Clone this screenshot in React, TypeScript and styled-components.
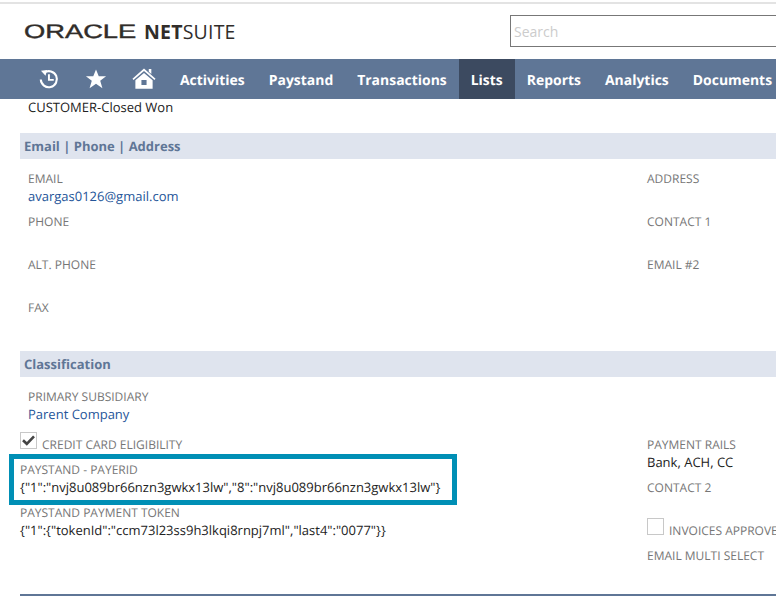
import React, { FC } from "react";
import styled, { createGlobalStyle } from "styled-components";

const GlobalStyle = createGlobalStyle`
  html, body {
    margin: 0;
    padding: 0;
    background: #fff;
    font-family: "Open Sans", "Liberation Sans", sans-serif;
    text-rendering: geometricPrecision;
  }
`;

const Page = styled.div`
  width: 776px;
  height: 596px;
  overflow: hidden;
  display: flex;
  flex-direction: column;
`;

const Header = styled.header`
  height: 57px;
  flex: none;
  border-top: 2px solid #e3e3e3;
  margin-top: 2px;
  box-sizing: border-box;
  display: flex;
  align-items: center;
  padding-left: 24px;
  justify-content: space-between;
`;

const Logo = styled.div`
  display: flex;
  align-items: center;
  color: #312d2a;
  width: 486px;
  flex: none;
  line-height: 18px;
`;

const OracleWord = styled.span`
  font-family: "Liberation Sans", sans-serif;
  font-size: 19.5px;
  display: inline-block;
  width: 120px;
  transform: scaleX(1.4);
  transform-origin: left center;
  -webkit-text-stroke: 0.4px #312d2a;
`;

const SuiteWord = styled.span`
  font-family: "Open Sans", sans-serif;
  font-size: 19.5px;
  font-weight: 400;
  letter-spacing: 0.2px;
  b {
    font-weight: 700;
  }
`;

const SearchInput = styled.input`
  flex: none;
  width: 300px;
  height: 32px;
  box-sizing: border-box;
  border: 1px solid #777;
  padding: 2px 3px 0;
  font-family: inherit;
  font-size: 14px;
  margin-top: -2px;
  outline: none;
  &::placeholder {
    color: #ccc;
    opacity: 1;
  }
`;

const Nav = styled.nav`
  height: 40px;
  flex: none;
  background: #5f7696;
  display: flex;
  align-items: stretch;
  white-space: nowrap;
  padding-left: 24px;
`;

const IconSlot = styled.div`
  width: 48px;
  flex: none;
  display: flex;
  align-items: center;
  justify-content: center;
`;

const NavItem = styled.div<{ $active?: boolean }>`
  padding: 2px 12px 0;
  flex: none;
  display: flex;
  align-items: center;
  font-size: 13.95px;
  font-weight: 700;
  color: #fff;
  background: ${(p) => (p.$active ? "#3c4a60" : "transparent")};
`;

const Status = styled.div`
  font-size: 13px;
  line-height: 16px;
  color: #222;
  padding: 0 0 0 28px;
  height: 34px;
  flex: none;
`;

const Band = styled.div`
  height: 26px;
  flex: none;
  margin-left: 20px;
  padding-left: 4px;
  background: #dfe4ee;
  color: #5f7696;
  font-size: 13px;
  font-weight: 700;
  line-height: 26px;
`;

const Columns = styled.div`
  display: grid;
  grid-template-columns: 619px 1fr;
  padding: 10px 0 10px 28px;
  flex: none;
`;

const Column = styled.div<{ $top?: number }>`
  display: flex;
  flex-direction: column;
  padding-top: ${(p) => p.$top ?? 0}px;
  white-space: nowrap;
`;

const Field = styled.div<{ $h?: number; $flush?: boolean }>`
  position: relative;
  height: ${(p) => p.$h ?? 43}px;
  margin-left: ${(p) => (p.$flush ? -8 : 0)}px;
`;

const Label = styled.div`
  font-size: 12px;
  height: 18px;
  line-height: 20px;
  color: #767676;
`;

const Value = styled.div`
  font-size: 13px;
  line-height: 18px;
  color: #222;
`;

const LinkValue = styled.div`
  font-size: 13px;
  line-height: 18px;
  color: #255599;
`;

const CheckRow = styled.div<{ $flush?: boolean }>`
  height: 30px;
  padding-top: 2px;
  box-sizing: border-box;
  display: flex;
  gap: 5px;
  margin-left: ${(p) => (p.$flush ? -8 : 0)}px;
`;

const CheckBox = styled.div`
  width: 17px;
  height: 17px;
  flex: none;
  box-sizing: border-box;
  border: 1px solid #c8c8c8;
  display: flex;
  align-items: center;
  justify-content: center;
`;

const CheckLabel = styled(Label)`
  margin-top: 3px;
`;

const Highlight = styled.div`
  position: absolute;
  top: -6px;
  left: -11px;
  width: 448px;
  height: 51px;
  box-sizing: border-box;
  border: 5px solid #008fb5;
  pointer-events: none;
`;

const BottomRule = styled.div`
  height: 2px;
  flex: none;
  margin: 20px 0 0 20px;
  background: #5f7696;
`;

const HistoryIcon: FC = () => (
  <svg width="21" height="22" viewBox="0 0 24 24" fill="none" stroke="#fff">
    <path d="M7.2 4.6A9.2 9.2 0 1 1 3.2 12.6" strokeWidth="2.4" />
    <path d="M3.4 2.6 10.4 1.8 8.6 8.2Z" fill="#fff" stroke="none" />
    <path d="M12.5 6.5V13H18" strokeWidth="2.2" />
  </svg>
);

const StarIcon: FC = () => (
  <svg width="22" height="22" viewBox="0 0 24 24" fill="#fff">
    <path d="M12 1.6 15 9.1H23L16.6 14 19 22 12 17.2 5 22 7.4 14 1 9.1H9Z" />
  </svg>
);

const HomeIcon: FC = () => (
  <svg width="24" height="22" viewBox="0 0 26 24" fill="#fff">
    <path d="M18.2 1.2H21V6.6L18.2 4.2Z" />
    <path d="M13 .6 25.6 11.6 24.4 13 13 3.4 1.6 13 .4 11.6Z" />
    <path fillRule="evenodd" d="M13 5.4 22.4 13.4V22.6H3.6V13.4ZM10.2 13.2V18.6H15.8V13.2Z" />
  </svg>
);

const CheckMark: FC = () => (
  <svg width="13" height="11" viewBox="0 0 13 11" fill="none" stroke="#444" strokeWidth="2.6">
    <path d="M1 5.2 4.8 8.8 12 1.4" />
  </svg>
);

const navItems = ["Activities", "Paystand", "Transactions", "Lists", "Reports", "Analytics", "Documents"];

const App: FC = () => {
  return (
    <Page>
      <GlobalStyle />
      <Header>
        <Logo>
          <OracleWord>ORACLE</OracleWord>
          <SuiteWord>
            <b>NET</b>SUITE
          </SuiteWord>
        </Logo>
        <SearchInput placeholder="Search" readOnly />
      </Header>
      <Nav>
        <IconSlot>
          <HistoryIcon />
        </IconSlot>
        <IconSlot>
          <StarIcon />
        </IconSlot>
        <IconSlot>
          <HomeIcon />
        </IconSlot>
        {navItems.map((item) => (
          <NavItem key={item} $active={item === "Lists"}>
            {item}
          </NavItem>
        ))}
      </Nav>
      <Status>CUSTOMER-Closed Won</Status>
      <Band>Email | Phone | Address</Band>
      <Columns>
        <Column>
          <Field>
            <Label>EMAIL</Label>
            <LinkValue>avargas0126@gmail.com</LinkValue>
          </Field>
          <Field>
            <Label>PHONE</Label>
          </Field>
          <Field>
            <Label>ALT. PHONE</Label>
          </Field>
          <Field>
            <Label>FAX</Label>
          </Field>
        </Column>
        <Column>
          <Field>
            <Label>ADDRESS</Label>
          </Field>
          <Field>
            <Label>CONTACT 1</Label>
          </Field>
          <Field>
            <Label>EMAIL #2</Label>
          </Field>
        </Column>
      </Columns>
      <Band>Classification</Band>
      <Columns>
        <Column>
          <Field>
            <Label>PRIMARY SUBSIDIARY</Label>
            <LinkValue>Parent Company</LinkValue>
          </Field>
          <CheckRow $flush>
            <CheckBox>
              <CheckMark />
            </CheckBox>
            <CheckLabel>CREDIT CARD ELIGIBILITY</CheckLabel>
          </CheckRow>
          <Field $flush>
            <Label>PAYSTAND - PAYERID</Label>
            <Value>{'{"1":"nvj8u089br66nzn3gwkx13lw","8":"nvj8u089br66nzn3gwkx13lw"}'}</Value>
            <Highlight />
          </Field>
          <Field $flush>
            <Label>PAYSTAND PAYMENT TOKEN</Label>
            <Value>{'{"1":{"tokenId":"ccm73l23ss9h3lkqi8rnpj7ml","last4":"0077"}}'}</Value>
          </Field>
        </Column>
        <Column $top={48}>
          <Field>
            <Label>PAYMENT RAILS</Label>
            <Value>Bank, ACH, CC</Value>
          </Field>
          <Field $h={38}>
            <Label>CONTACT 2</Label>
          </Field>
          <CheckRow>
            <CheckBox />
            <CheckLabel>INVOICES APPROVED</CheckLabel>
          </CheckRow>
          <Field $h={18}>
            <Label>EMAIL MULTI SELECT</Label>
          </Field>
        </Column>
      </Columns>
      <BottomRule />
    </Page>
  );
};

export default App;
